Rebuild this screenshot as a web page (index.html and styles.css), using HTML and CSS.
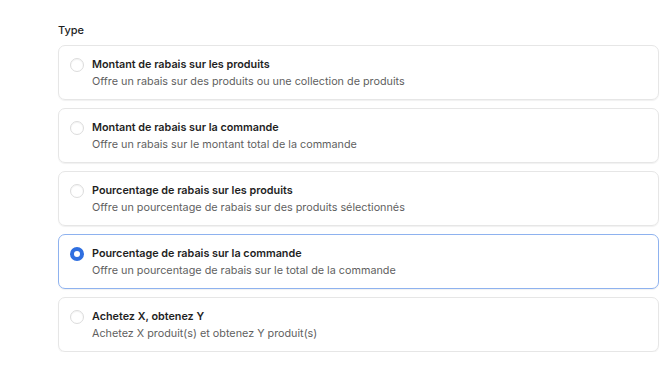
FILE: index.html
```html
<!DOCTYPE html>
<html lang="fr">
<head>
  <meta charset="UTF-8">
  <meta name="viewport" content="width=device-width, initial-scale=1.0">
  <title>Type de rabais</title>
  <link rel="stylesheet" href="styles.css">
</head>
<body>
  <div class="panel">
    <div class="label">Type</div>
    <div class="options">
      <label class="option">
        <span class="radio"></span>
        <span class="text">
          <span class="title">Montant de rabais sur les produits</span>
          <span class="desc">Offre un rabais sur des produits ou une collection de produits</span>
        </span>
      </label>
      <label class="option">
        <span class="radio"></span>
        <span class="text">
          <span class="title">Montant de rabais sur la commande</span>
          <span class="desc">Offre un rabais sur le montant total de la commande</span>
        </span>
      </label>
      <label class="option">
        <span class="radio"></span>
        <span class="text">
          <span class="title">Pourcentage de rabais sur les produits</span>
          <span class="desc">Offre un pourcentage de rabais sur des produits sélectionnés</span>
        </span>
      </label>
      <label class="option selected">
        <span class="radio"></span>
        <span class="text">
          <span class="title">Pourcentage de rabais sur la commande</span>
          <span class="desc">Offre un pourcentage de rabais sur le total de la commande</span>
        </span>
      </label>
      <label class="option">
        <span class="radio"></span>
        <span class="text">
          <span class="title">Achetez X, obtenez Y</span>
          <span class="desc">Achetez X produit(s) et obtenez Y produit(s)</span>
        </span>
      </label>
    </div>
  </div>
</body>
</html>
```

FILE: styles.css
```css
body {
  margin: 0;
  background: #fff;
  font-family: Inter, "Noto Sans", sans-serif;
  color: #1f1f1f;
}
.panel { padding: 22px 0 0 58px; width: 601px; }
.label { font-size: 11px; font-weight: 500; line-height: 16px; margin-bottom: 7px; }
.options { display: flex; flex-direction: column; gap: 8px; }
.option {
  display: flex;
  align-items: flex-start;
  gap: 8px;
  padding: 11px 12px 9px 11px;
  border: 1px solid #e6e6e6;
  border-radius: 7px;
  box-shadow: 0 1px 1px rgba(0,0,0,0.06);
  cursor: pointer;
}
.option.selected { border-color: #8eb2ef; }
.radio {
  width: 12px;
  height: 12px;
  margin-top: 1px;
  border: 1px solid #dcdcdc;
  border-radius: 50%;
  box-shadow: inset 0 1px 1px rgba(0,0,0,0.05);
  flex-shrink: 0;
}
.selected .radio {
  border: 4px solid #2f6fe0;
  width: 6px;
  height: 6px;
  background: #fff;
  box-shadow: none;
}
.text { display: flex; flex-direction: column; }
.title { font-size: 10.8px; font-weight: 600; line-height: 16px; }
.desc { font-size: 10.8px; line-height: 17px; color: #5f5f5f; }
```
